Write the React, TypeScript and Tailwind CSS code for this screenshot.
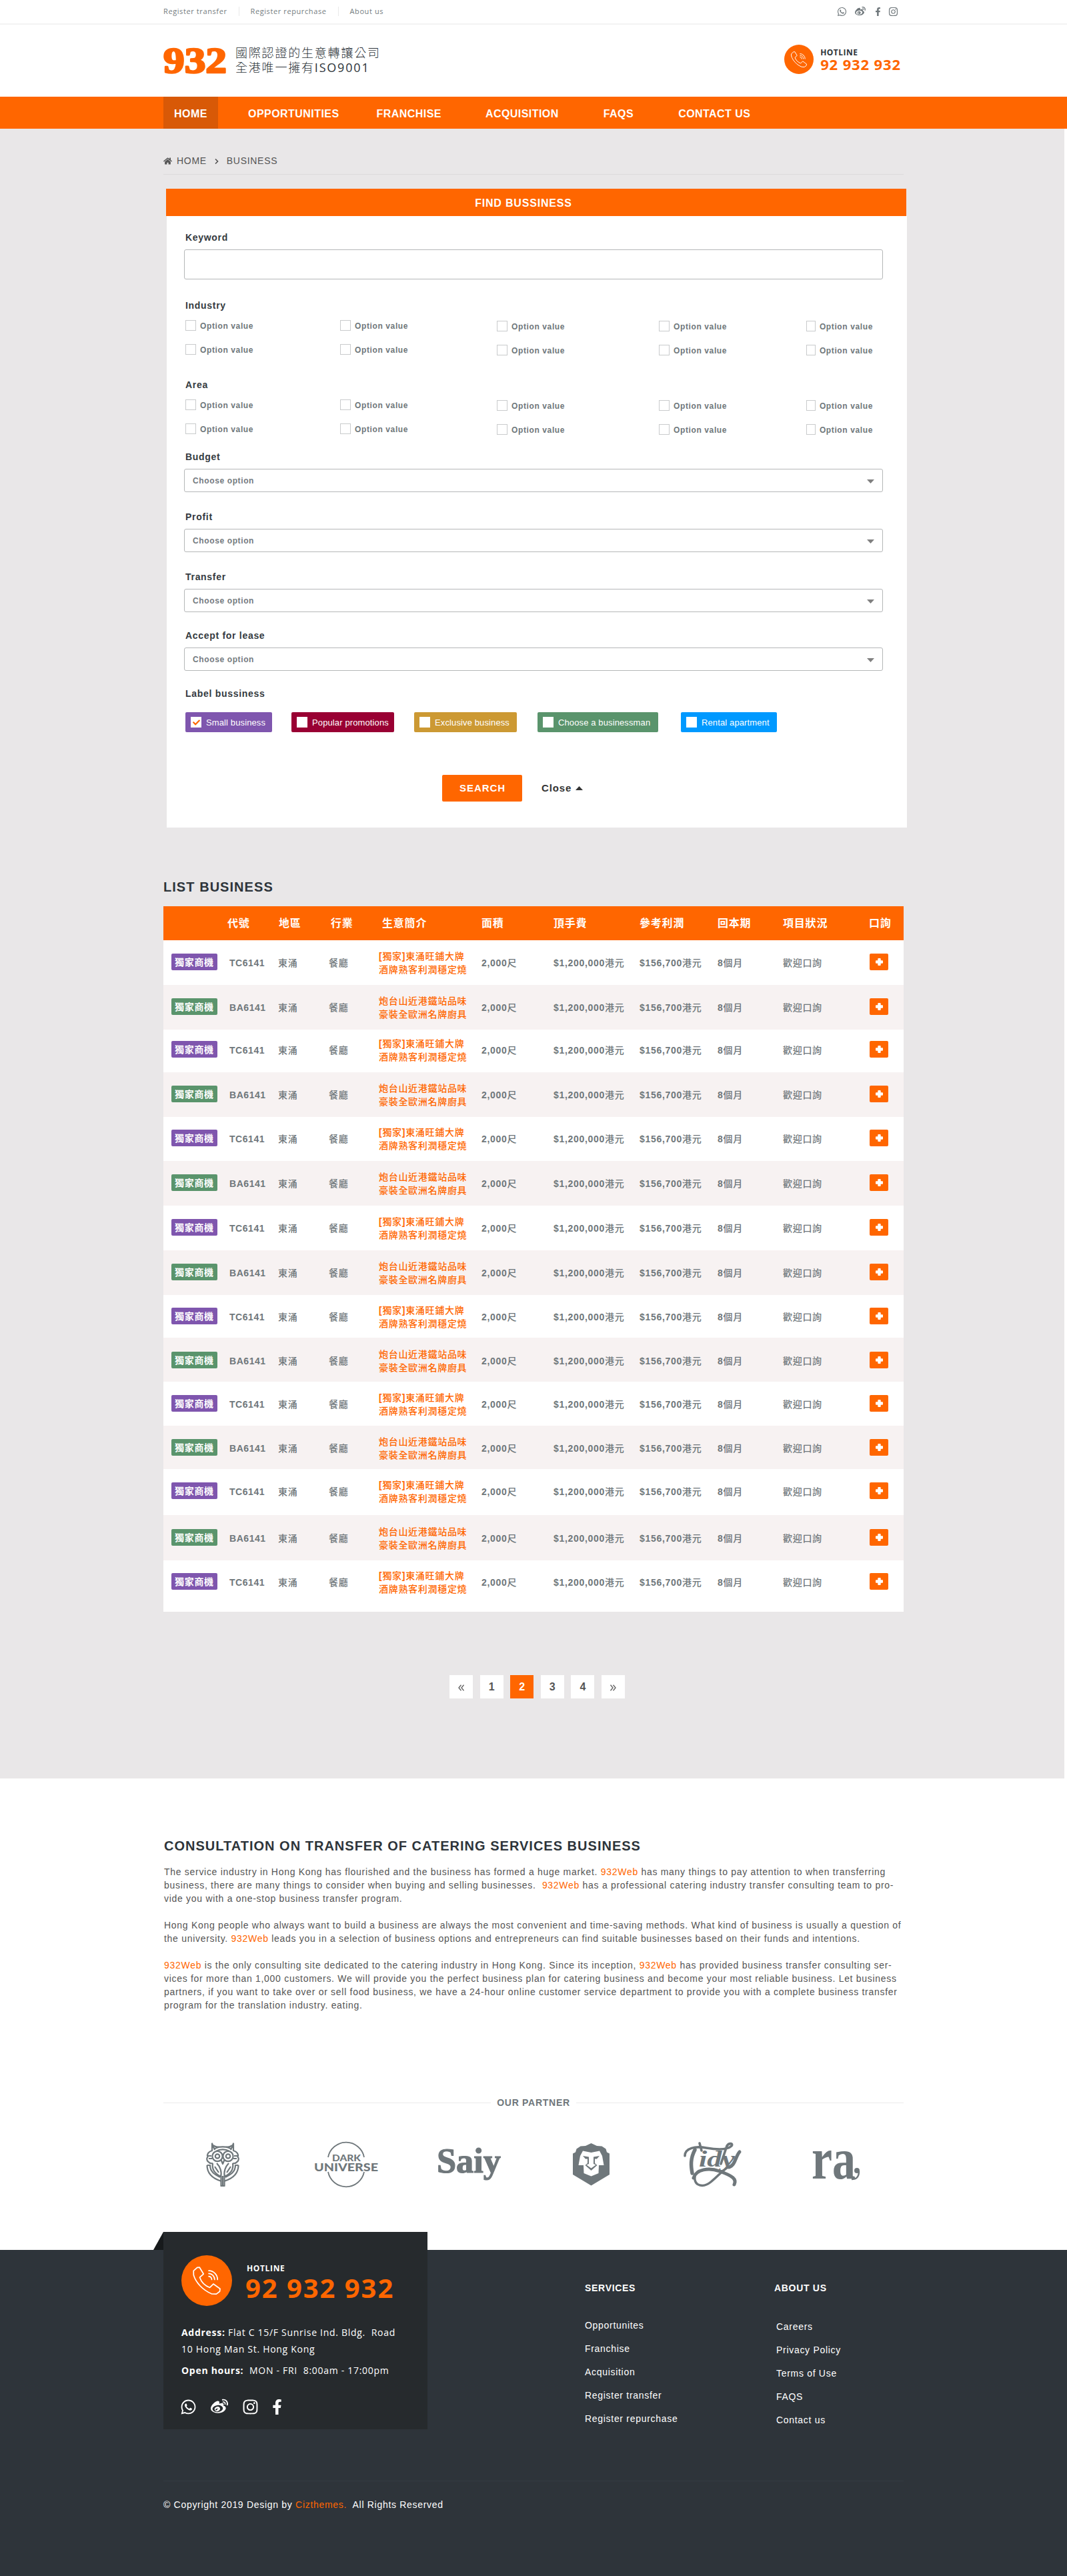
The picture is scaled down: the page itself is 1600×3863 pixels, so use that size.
import React from "react";
import { FaCheck, FaFacebookF, FaHome, FaInstagram, FaWeibo, FaWhatsapp } from "react-icons/fa";

function PhoneIcon({ className }: { className: string }) {
  return (
    <svg viewBox="0 0 41 41" className={className} fill="none" stroke="currentColor" strokeWidth="1.7" strokeLinejoin="round" strokeLinecap="round">
      <path d="M1.2 6.2 6.6 1.4 10 1.2 15.8 10.8 10.3 15.8C12.5 22.500 18 28 25 30.700L30.200 25.400 40 32.400 39.600 36.400 34.600 40.200 27.500 39.800C15 34.500 4.500 23.500 1.300 12.500Z" />
      <path d="M23.500 14.200a5 5 0 0 1 4.300 4.800M23.500 10.200a9 9 0 0 1 8.600 8.800M23.500 6a13 13 0 0 1 12.800 13" />
    </svg>
  );
}

function Plus() {
  return (
    <svg viewBox="0 0 11 11" className="size-[11px]" fill="#fff">
      <rect x="3.300" y="0" width="4.400" height="11" rx="1" />
      <rect x="0" y="3.300" width="11" height="4.400" rx="1" />
    </svg>
  );
}

function TopBar() {
  return (
    <div className="h-[37px] border-b-2 border-[#f3f3f3]">
      <div className="ml-[245px] flex h-[34px] w-[1110px] items-center font-['Open_Sans',sans-serif] text-[11px] tracking-[0.6px] text-[#747c80]">
        <a>Register transfer</a>
        <span className="ml-[17px] h-[14px] w-px bg-[#e9e9e9]" />
        <a className="ml-[17px]">Register repurchase</a>
        <span className="ml-[17px] h-[14px] w-px bg-[#e9e9e9]" />
        <a className="ml-[17px]">About us</a>
        <div className="ml-auto mr-[8px] flex items-center text-[#6f777b]">
          <FaWhatsapp className="size-[15px]" />
          <FaWeibo className="ml-[12px] size-[16px]" />
          <FaFacebookF className="ml-[12px] size-[13px]" />
          <FaInstagram className="ml-[9px] size-[15px]" />
        </div>
      </div>
    </div>
  );
}

function Masthead() {
  return (
    <div className="flex h-[108px] items-start pl-[245px]">
      <svg width="95" height="40" viewBox="0 0 95 40" className="mt-[34px] overflow-visible">
        <text x="0" y="38.300" fontFamily="Liberation Serif, serif" fontWeight="700" fontSize="55" textLength="95" lengthAdjust="spacingAndGlyphs" fill="#ff6600" stroke="#ff6600" strokeWidth="2.600" strokeLinejoin="round">932</text>
      </svg>
      <div className="ml-[13px] mt-[31px] font-['Open_Sans','Noto_Sans_CJK_TC',sans-serif] text-[18px] font-light leading-[22px] tracking-[1.8px] text-[#2d343a]">
        <p className="whitespace-nowrap">國際認證的生意轉讓公司</p>
        <p className="whitespace-nowrap">全港唯一擁有<span className="font-normal">ISO9001</span></p>
      </div>
      <div className="ml-auto mr-[249px] mt-[30px] flex">
        <div className="flex size-[44px] items-center justify-center rounded-full bg-[#ff6600] text-white">
          <PhoneIcon className="size-[24px]" />
        </div>
        <div className="ml-[10px] mt-[5px] font-['Open_Sans',sans-serif] font-bold">
          <p className="text-[12px] leading-[14px] tracking-[0.5px] text-[#2d343a]">HOTLINE</p>
          <p className="whitespace-nowrap text-[22px] leading-[20px] tracking-[0.880px] text-[#ff6600]">92 932 932</p>
        </div>
      </div>
    </div>
  );
}

function Nav() {
  return (
    <nav className="flex h-[48px] items-stretch bg-[#ff6600] pl-[245px] text-[16px] font-bold tracking-[0.450px] text-white">
      <a className="flex w-[82px] items-center justify-center bg-[#d85907] pt-[3px]">HOME</a>
      <a className="ml-[45px] flex items-center pt-[3px]">OPPORTUNITIES</a>
      <a className="ml-[56px] flex items-center pt-[3px]">FRANCHISE</a>
      <a className="ml-[66px] flex items-center pt-[3px]">ACQUISITION</a>
      <a className="ml-[67px] flex items-center pt-[3px]">FAQS</a>
      <a className="ml-[67px] flex items-center whitespace-nowrap pt-[3px]">CONTACT US</a>
    </nav>
  );
}

function Label({ children }: { children: React.ReactNode }) {
  return <p className="ml-[2px] text-[14px] font-bold leading-[20px] tracking-[0.700px] text-[#343a40]">{children}</p>;
}

function Option({ low }: { low: boolean }) {
  return (
    <div className={low ? "flex items-start pt-px" : "flex items-start"}>
      <span className="size-[16px] border border-[#c9cbcc] bg-white" />
      <span className="ml-[6px] whitespace-nowrap text-[12px] font-bold leading-[19px] tracking-[0.620px] text-[#6f777b]">Option value</span>
    </div>
  );
}

function OptionGrid() {
  return (
    <div className="ml-[2px] mt-[12px] grid auto-rows-[36px] grid-cols-[232px_235px_243px_221px_100px]">
      {Array.from({ length: 10 }, (_, i) => (
        <Option key={i} low={i % 5 > 1} />
      ))}
    </div>
  );
}

function Select() {
  return (
    <div className="mt-[8px] flex h-[35px] items-center justify-between rounded-[3px] border border-[#b5b7b8] pl-[12px] pr-[12px] text-[12px] font-bold tracking-[0.620px] text-[#747b7f]">
      Choose option
      <svg width="11" height="6" viewBox="0 0 11 6" className="mt-[3px]">
        <path d="M0 0h11L5.500 6Z" fill="#808080" />
      </svg>
    </div>
  );
}

const chips = [
  { text: "Small business", cls: "w-[130px] bg-[#7f56ae]", on: true },
  { text: "Popular promotions", cls: "ml-[29px] w-[154px] bg-[#990033]", on: false },
  { text: "Exclusive business", cls: "ml-[30px] w-[154px] bg-[#cc9933]", on: false },
  { text: "Choose a businessman", cls: "ml-[31px] w-[181px] bg-[#5a946c]", on: false },
  { text: "Rental apartment", cls: "ml-[34px] w-[144px] bg-[#0099ff]", on: false },
];

function SearchForm() {
  return (
    <form className="ml-[249px] mt-[21px] w-[1111px]">
      <h2 className="mr-px flex h-[41px] items-center justify-center bg-[#ff6600] pr-[38px] pt-[2px] text-[16px] font-bold tracking-[0.820px] text-white">FIND BUSSINESS</h2>
      <div className="ml-px h-[917px] bg-white pl-[26px] pr-[36px] pt-[22px]">
        <div className="h-[102px]">
          <Label>Keyword</Label>
          <div className="mt-[8px] h-[45px] rounded-[3px] border border-[#b5b7b8]" />
        </div>
        <div className="h-[119px]">
          <Label>Industry</Label>
          <OptionGrid />
        </div>
        <div className="h-[108px]">
          <Label>Area</Label>
          <OptionGrid />
        </div>
        <div className="h-[90px]">
          <Label>Budget</Label>
          <Select />
        </div>
        <div className="h-[90px]">
          <Label>Profit</Label>
          <Select />
        </div>
        <div className="h-[88px]">
          <Label>Transfer</Label>
          <Select />
        </div>
        <div className="h-[87px]">
          <Label>Accept for lease</Label>
          <Select />
        </div>
        <Label>Label bussiness</Label>
        <div className="ml-[2px] mt-[18px] flex">
          {chips.map((c) => (
            <div key={c.text} className={`${c.cls} flex h-[30px] items-center rounded-[2px] pl-[8px] text-[13px] tracking-[0.120px] text-white`}>
              <span className="mr-[7px] flex size-[16px] shrink-0 items-center justify-center bg-white">
                {c.on && <FaCheck className="size-[11px] text-[#ff6600]" />}
              </span>
              <span className="whitespace-nowrap pt-px">{c.text}</span>
            </div>
          ))}
        </div>
        <div className="ml-[387px] mt-[64px] flex items-center">
          <button className="h-[40px] w-[120px] rounded-[2px] bg-[#ff6600] pl-px text-[15px] font-bold tracking-[0.930px] text-white">SEARCH</button>
          <span className="ml-[29px] text-[15px] font-bold tracking-[0.900px] text-[#333]">Close</span>
          <svg width="11" height="6" viewBox="0 0 11 6" className="ml-[6px]">
            <path d="M0 6h11L5.500 0Z" fill="#333" />
          </svg>
        </div>
      </div>
    </form>
  );
}

const rowHeights = [
  "h-[67px] pt-[20px]",
  "h-[67px] pt-[20px]",
  "h-[64px] pt-[17px]",
  "h-[67px] pt-[20px]",
  "h-[66px] pt-[19px]",
  "h-[67px] pt-[20px]",
  "h-[67px] pt-[20px]",
  "h-[67px] pt-[20px]",
  "h-[64px] pt-[19px]",
  "h-[66px] pt-[21px]",
  "h-[66px] pt-[20px]",
  "h-[65px] pt-[20px]",
  "h-[69px] pt-[20px]",
  "h-[68px] pt-[21px]",
  "h-[77px] pt-[19px]",
];

function Unit({ children }: { children: React.ReactNode }) {
  return <span className="font-medium">{children}</span>;
}

function BusinessTable() {
  return (
    <div className="ml-[245px] mt-[17px] w-[1110px] font-['Liberation_Sans','Noto_Sans_CJK_TC',sans-serif] font-bold">
      <div className="grid h-[51px] grid-cols-[87px_73px_77px_74px_154px_108px_129px_117px_98px_130px_38px] items-center whitespace-nowrap bg-[#ff6600] pl-[12px] text-[16px] tracking-[0.800px] text-white">
        <span />
        <span className="-ml-[3px]">代號</span>
        <span className="ml-px">地區</span>
        <span className="ml-[2px]">行業</span>
        <span className="ml-[5px]">生意簡介</span>
        <span>面積</span>
        <span>頂手費</span>
        <span>參考利潤</span>
        <span>回本期</span>
        <span>項目狀況</span>
        <span className="-ml-px">口詢</span>
      </div>
      {rowHeights.map((h, i) => {
        const even = i % 2 === 1;
        return (
          <div
            key={i}
            className={`${h} ${even ? "bg-[#f7f2f2]" : "bg-white"} grid grid-cols-[87px_73px_77px_74px_154px_108px_129px_117px_98px_130px_38px] items-start whitespace-nowrap pl-[12px] text-[14px] leading-[28px] tracking-[0.700px] text-[#6f777b]`}
          >
            <span className={`${even ? "bg-[#5a946c]" : "bg-[#7f56ae]"} h-[25px] w-[69px] rounded-[2px] pl-[5px] leading-[26px] text-white`}>獨家商機</span>
            <span className="tracking-[0.550px]">{even ? "BA6141" : "TC6141"}</span>
            <span><Unit>東涌</Unit></span>
            <span className="-ml-px"><Unit>餐廳</Unit></span>
            <span className="-mt-[6px] leading-[20px] text-[#ff6600]">
              {even ? <Unit>炮台山近港鐵站品味</Unit> : <>[<Unit>獨家</Unit>]<Unit>東涌旺鋪大牌</Unit></>}
              <br />
              <Unit>{even ? "豪裝全歐洲名牌廚具" : "酒牌熟客利潤穩定燒"}</Unit>
            </span>
            <span>2,000<Unit>尺</Unit></span>
            <span>$1,200,000<Unit>港元</Unit></span>
            <span>$156,700<Unit>港元</Unit></span>
            <span>8<Unit>個月</Unit></span>
            <span><Unit>歡迎口詢</Unit></span>
            <span className="flex h-[25px] w-[28px] items-center justify-center rounded-[2px] bg-[#ff6600]">
              <Plus />
            </span>
          </div>
        );
      })}
    </div>
  );
}

function DoubleChevron({ flip }: { flip: boolean }) {
  return (
    <svg viewBox="0 0 9 10" className={flip ? "mt-[2px] h-[10px] w-[9px] rotate-180" : "mt-[2px] h-[10px] w-[9px]"} fill="none" stroke="#666" strokeWidth="1.400">
      <path d="M4.500 .7 1 5l3.500 4.300M8.500 .7 5 5l3.500 4.300" />
    </svg>
  );
}

function Pagination() {
  return (
    <div className="ml-[674px] mt-[95px] flex gap-[10.600px] text-[16px] font-bold text-[#555]">
      {["prev", "1", "2", "3", "4", "next"].map((p) => (
        <span key={p} className={p === "2" ? "flex size-[35px] items-center justify-center bg-[#ff6600] pt-px text-white" : "flex size-[35px] items-center justify-center bg-white pt-px"}>
          {p === "prev" || p === "next" ? <DoubleChevron flip={p === "next"} /> : p}
        </span>
      ))}
    </div>
  );
}

function Brand() {
  return <span className="text-[#ff6600]">932Web</span>;
}

function Article() {
  return (
    <section className="ml-[246px] h-[476px] pt-[89px]">
      <h2 className="whitespace-nowrap text-[20px] font-bold leading-[24px] tracking-[1.010px] text-[#2d343a]">CONSULTATION ON TRANSFER OF CATERING SERVICES BUSINESS</h2>
      <div className="mt-[17px] whitespace-pre text-[14px] leading-[20px] tracking-[0.705px] text-[#555]">
        <p>The service industry in Hong Kong has flourished and the business has formed a huge market. <Brand /> has many things to pay attention to when transferring</p>
        <p>business, there are many things to consider when buying and selling businesses.{"  "}<Brand /> has a professional catering industry transfer consulting team to pro-</p>
        <p>vide you with a one-stop business transfer program.</p>
        <p className="mt-[20px]">Hong Kong people who always want to build a business are always the most convenient and time-saving methods. What kind of business is usually a question of</p>
        <p>the university. <Brand /> leads you in a selection of business options and entrepreneurs can find suitable businesses based on their funds and intentions.</p>
        <p className="mt-[20px]"><Brand /> is the only consulting site dedicated to the catering industry in Hong Kong. Since its inception, <Brand /> has provided business transfer consulting ser-</p>
        <p>vices for more than 1,000 customers. We will provide you the perfect business plan for catering business and become your most reliable business. Let business</p>
        <p>partners, if you want to take over or sell food business, we have a 24-hour online customer service department to provide you with a complete business transfer</p>
        <p>program for the translation industry. eating.</p>
      </div>
    </section>
  );
}

function Owl() {
  return (
    <svg width="52" height="66" viewBox="0 0 52 66" fill="none" stroke="#6f777b" strokeWidth="2.200" strokeLinejoin="round">
      <path d="M14 11 10 1.500V12C4 14 2 18 3.500 21.500 1.500 23.500 2 27 4 28.500 6 31 9 31.500 11 31M38 11 42 1.500V12C48 14 50 18 48.500 21.500 50.500 23.500 50 27 48 28.500 46 31 43 31.500 41 31" />
      <path d="M12 4c4 4 8 2.500 14 2.500S36 8 40 4M13 10C20 5 32 5 39 10M16 13C22 9.500 30 9.500 36 13" />
      <circle cx="18" cy="20.500" r="7.600" />
      <circle cx="18" cy="20.500" r="3.200" />
      <circle cx="34" cy="20.500" r="7.600" />
      <circle cx="34" cy="20.500" r="3.200" />
      <path d="M4 20h5M5 24h5M48 20h-5M47 24h-5M23.500 26 26 32 28.500 26" />
      <path d="M2.500 34H7C7 44 14 48 22 52M2.500 34C2.500 47 11 54 24 58M49.500 34H45C45 44 38 48 30 52M49.500 34C49.500 47 41 54 28 58" />
      <path d="M11 31C9 42 17 48 23 51 25 44 22 36 17 31M41 31C43 42 35 48 29 51 27 44 30 36 35 31M14 36l6 9M38 36l-6 9" />
      <path d="M23.500 50V65h5V50M26 50V65" />
    </svg>
  );
}

function DarkUniverse() {
  return (
    <svg width="98" height="62" viewBox="0 0 98 62" fill="#6f777b" className="overflow-visible">
      <g fill="none" stroke="#6f777b" strokeWidth="1.800">
        <path d="M22 20A27.500 27.500 0 0 1 76 20M22 42A27.500 27.500 0 0 0 76 42" />
      </g>
      <text x="28" y="25.500" fontFamily="Lato, sans-serif" fontWeight="900" fontSize="14" textLength="43" lengthAdjust="spacingAndGlyphs">DARK</text>
      <text x="1" y="40.500" fontFamily="Lato, sans-serif" fontWeight="900" fontSize="17.500" textLength="96" lengthAdjust="spacingAndGlyphs">UNIVERSE</text>
    </svg>
  );
}

function Saiy() {
  return (
    <svg width="98" height="54" viewBox="0 0 98 54" fill="#6f777b" stroke="#6f777b" strokeWidth="1.200" className="overflow-visible">
      <text x="0" y="38.500" fontFamily="Liberation Serif, serif" fontWeight="700" fontSize="52" textLength="96" lengthAdjust="spacingAndGlyphs">Saiy</text>
    </svg>
  );
}

function Lion() {
  return (
    <svg width="57" height="64" viewBox="0 0 57 64">
      <path d="M28.500 0 37 4 44.500 4.500 50.500 8.500 52 13.500 56 15.500V47L28.500 63.500 1 47V15.500L5 13.500 6.500 8.500 12.500 4.500 20 4Z" fill="#6f777b" />
      <path d="M16 11.500 28.500 14 41 11.500 45 19 47.500 33H40L39.500 45 28.500 49.500 17.500 45 17 33H9.500L12 19Z" fill="#fff" />
      <path d="M16 19 25 20.500V31L21.500 32.500 28.500 37.500 35.500 32.500 32 31V20.500L41 19 37 23.500H34V30L37.500 33 28.500 41 19.500 33 23 30V23.500H20Z" fill="#6f777b" />
    </svg>
  );
}

function Tidy() {
  return (
    <svg width="88" height="66" viewBox="0 0 88 66" fill="none" stroke="#6f777b" strokeLinecap="round" className="overflow-visible">
      <path d="M2 20C2 8 18 5 34 8 52 11 66 11 72 5 75 1 68 0 65 5L56 32" strokeWidth="3.600" />
      <path d="M17 11C10 24 11 35 13 46" strokeWidth="5.500" />
      <path d="M24 1 27 12" strokeWidth="3.600" />
      <path d="M84 14C78 20 78 34 68 37" strokeWidth="5" />
      <path d="M15 53C19 40 38 37 54 43 74 50 80 55 76 63" strokeWidth="5" />
      <path d="M17 50C15 66 30 68 41 59 50 52 58 42 68 36" strokeWidth="3.400" />
      <text x="23" y="36" fontFamily="Liberation Serif, serif" fontStyle="italic" fontWeight="700" fontSize="33" textLength="54" lengthAdjust="spacingAndGlyphs" fill="#6f777b" stroke="none">idy</text>
    </svg>
  );
}

function Ra() {
  return (
    <svg width="73" height="48" viewBox="0 0 73 48" fill="#6f777b" className="overflow-visible">
      <text x="0" y="45" fontFamily="Liberation Serif, serif" fontWeight="700" fontSize="88" textLength="66" lengthAdjust="spacingAndGlyphs">ra</text>
      <circle cx="68" cy="33" r="4" />
      <path d="M71 34C71 42 68 46 60 46" fill="none" stroke="#6f777b" strokeWidth="2.500" />
    </svg>
  );
}

function Partners() {
  return (
    <section className="ml-[245px] h-[231px] w-[1110px]">
      <div className="flex items-center">
        <span className="h-px flex-1 bg-[#ebebeb]" />
        <h3 className="px-[9px] text-[14px] font-bold leading-[20px] tracking-[0.730px] text-[#6f777b]">OUR PARTNER</h3>
        <span className="h-px flex-1 bg-[#ebebeb]" />
      </div>
      <div className="mt-[50px] flex h-[66px] items-center">
        <div className="ml-[63px]"><Owl /></div>
        <div className="ml-[110px]"><DarkUniverse /></div>
        <div className="ml-[87px]"><Saiy /></div>
        <div className="ml-[105px]"><Lion /></div>
        <div className="ml-[110px]"><Tidy /></div>
        <div className="ml-[104px]"><Ra /></div>
      </div>
    </section>
  );
}

function LinkColumn({ title, links, className }: { title: string; links: string[]; className: string }) {
  return (
    <div className={`${className} whitespace-nowrap text-[14px] tracking-[0.700px] text-white`}>
      <h4 className="font-bold leading-[20px]">{title}</h4>
      <ul className={title === "SERVICES" ? "mt-[29px]" : "ml-[3px] mt-[31px]"}>
        {links.map((l) => (
          <li key={l} className="h-[35px] leading-[35px]">{l}</li>
        ))}
      </ul>
    </div>
  );
}

function Footer() {
  return (
    <footer className="h-[489px] bg-[#2e343a] pl-[230px]">
      <div className="flex h-[346px] w-[1125px] items-start">
        <svg width="15" height="27" viewBox="0 0 15 27" className="-mt-[27px]">
          <path d="M15 0V27H0Z" fill="#171a1c" />
        </svg>
        <div className="-mt-[27px] h-[296px] w-[396px] bg-[#262a2d] pl-[27px] pt-[35px] font-['Open_Sans',sans-serif] text-[14px] tracking-[0.710px] text-white">
          <div className="flex h-[76px]">
            <div className="flex size-[76px] items-center justify-center rounded-full bg-[#ff6600]">
              <PhoneIcon className="size-[42px]" />
            </div>
            <div className="ml-[20px] pt-[11px] font-bold">
              <p className="ml-[2px] text-[12px] leading-[18px] tracking-[0.640px]">HOTLINE</p>
              <p className="whitespace-nowrap text-[40px] leading-[40px] tracking-[1.950px] text-[#ff6600]">92 932 932</p>
            </div>
          </div>
          <div className="mt-[27px] whitespace-pre">
            <p className="leading-[25px]"><b>Address:</b> Flat C 15/F Sunrise Ind. Bldg.{"  "}Road</p>
            <p className="leading-[25px]">10 Hong Man St. Hong Kong</p>
            <p className="mt-[7px] leading-[25px]"><b>Open hours:</b>{"  "}MON - FRI{"  "}8:00am - 17:00pm</p>
          </div>
          <div className="mt-[30px] flex h-[24px] items-center">
            <FaWhatsapp className="-ml-[2px] size-[25px]" />
            <FaWeibo className="ml-[21px] size-[26px]" />
            <FaInstagram className="ml-[21px] size-[25px]" />
            <FaFacebookF className="ml-[16px] size-[23px]" />
          </div>
        </div>
        <LinkColumn className="ml-[236px] mt-[47px] w-[284px]" title="SERVICES" links={["Opportunites", "Franchise", "Acquisition", "Register transfer", "Register repurchase"]} />
        <LinkColumn className="mt-[47px]" title="ABOUT US" links={["Careers", "Privacy Policy", "Terms of Use", "FAQS", "Contact us"]} />
      </div>
      <div className="ml-[15px] w-[1110px] whitespace-pre border-t border-[#343b42] pt-[25px] text-[14px] leading-[20px] tracking-[0.700px] text-white">
        © Copyright 2019 Design by <span className="text-[#ff6600]">Cizthemes.</span>{"  "}All Rights Reserved
      </div>
    </footer>
  );
}

export default function App() {
  return (
    <div className="w-[1600px] overflow-hidden bg-white font-['Liberation_Sans',sans-serif]">
      <TopBar />
      <Masthead />
      <Nav />
      <main className="mr-[4px] h-[2474px] bg-[#e9e7e8] pt-[38px]">
        <div className="ml-[245px] flex h-[31px] w-[1110px] items-start border-b border-[#dddbdc] text-[14px] leading-[20px] tracking-[0.700px] text-[#555]">
          <FaHome className="mt-[4px] size-[13px]" />
          <span className="ml-[7px]">HOME</span>
          <svg width="6" height="8" viewBox="0 0 6 8" className="ml-[12px] mt-[7px]" fill="none" stroke="#555" strokeWidth="1.600">
            <path d="M1 .5 4.500 4 1 7.500" />
          </svg>
          <span className="ml-[12px]">BUSINESS</span>
        </div>
        <SearchForm />
        <h2 className="ml-[245px] mt-[77px] text-[20px] font-bold leading-[24px] tracking-[1.050px] text-[#2d343a]">LIST BUSINESS</h2>
        <BusinessTable />
        <Pagination />
      </main>
      <Article />
      <Partners />
      <Footer />
    </div>
  );
}
